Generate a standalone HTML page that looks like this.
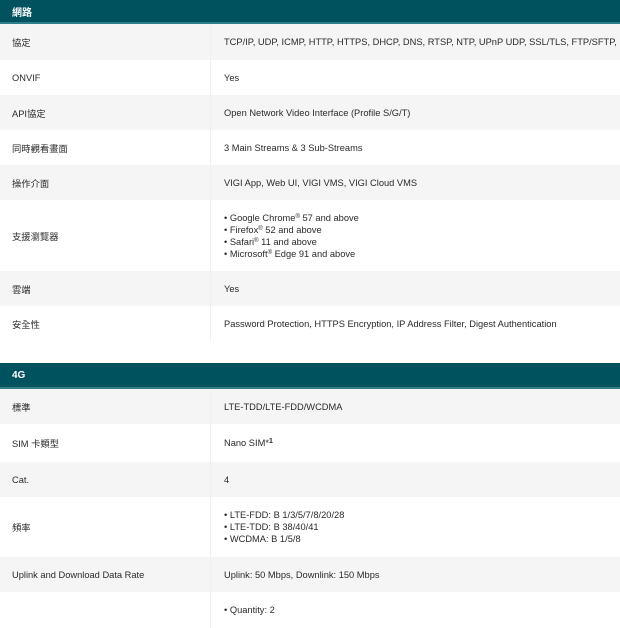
<!DOCTYPE html>
<html><head><meta charset="utf-8"><style>
*{margin:0;padding:0;box-sizing:border-box}
body{width:620px;height:620px;overflow:hidden;background:#fff;font-family:"Liberation Sans","Noto Sans CJK TC",sans-serif;font-size:9.3px;color:#2a2a2a;position:relative}
.h{position:absolute;left:0;width:620px;background:#00525f;border-bottom:2px solid #2f7f8a;color:#fff;font-weight:bold;font-size:10px;padding-left:12px;display:flex;align-items:center}
.r{position:absolute;left:0;width:620px;display:flex;align-items:center;overflow:hidden}
.r.g{background:#f5f5f5}
.r .k{position:absolute;left:12px}
.r .v{position:absolute;left:224px;white-space:nowrap;line-height:12px}
.r:after{content:"";position:absolute;left:210px;top:0;bottom:0;border-left:1px solid #f0f0f0}
sup{font-size:6px;line-height:0;vertical-align:3px}
</style></head><body>
<div class="h" style="top:0;height:24px">網路</div>
<div class="r g" style="top:24px;height:36px"><span class="k">協定</span><span class="v">TCP/IP, UDP, ICMP, HTTP, HTTPS, DHCP, DNS, RTSP, NTP, UPnP UDP, SSL/TLS, FTP/SFTP, RTP, IPv4</span></div>
<div class="r" style="top:60px;height:35px"><span class="k">ONVIF</span><span class="v">Yes</span></div>
<div class="r g" style="top:95px;height:35px"><span class="k">API協定</span><span class="v">Open Network Video Interface (Profile S/G/T)</span></div>
<div class="r" style="top:130px;height:35px"><span class="k">同時觀看畫面</span><span class="v">3 Main Streams &amp; 3 Sub-Streams</span></div>
<div class="r g" style="top:165px;height:35px"><span class="k">操作介面</span><span class="v">VIGI App, Web UI, VIGI VMS, VIGI Cloud VMS</span></div>
<div class="r" style="top:200px;height:71px"><span class="k">支援瀏覽器</span><span class="v">• Google Chrome<sup>®</sup> 57 and above<br>• Firefox<sup>®</sup> 52 and above<br>• Safari<sup>®</sup> 11 and above<br>• Microsoft<sup>®</sup> Edge 91 and above</span></div>
<div class="r g" style="top:271px;height:35px"><span class="k">雲端</span><span class="v">Yes</span></div>
<div class="r" style="top:306px;height:35px"><span class="k">安全性</span><span class="v">Password Protection, HTTPS Encryption, IP Address Filter, Digest Authentication</span></div>
<div class="h" style="top:363px;height:26px">4G</div>
<div class="r g" style="top:389px;height:35px"><span class="k">標準</span><span class="v">LTE-TDD/LTE-FDD/WCDMA</span></div>
<div class="r" style="top:424px;height:38px"><span class="k">SIM 卡類型</span><span class="v">Nano SIM*<sup style="font-size:7px;font-weight:bold">1</sup></span></div>
<div class="r g" style="top:462px;height:35px"><span class="k">Cat.</span><span class="v">4</span></div>
<div class="r" style="top:497px;height:60px"><span class="k">頻率</span><span class="v">• LTE-FDD: B 1/3/5/7/8/20/28<br>• LTE-TDD: B 38/40/41<br>• WCDMA: B 1/5/8</span></div>
<div class="r g" style="top:557px;height:35px"><span class="k">Uplink and Download Data Rate</span><span class="v">Uplink: 50 Mbps, Downlink: 150 Mbps</span></div>
<div class="r" style="top:592px;height:36px;align-items:flex-start"><span class="v" style="top:12px">• Quantity: 2</span></div>
</body></html>
